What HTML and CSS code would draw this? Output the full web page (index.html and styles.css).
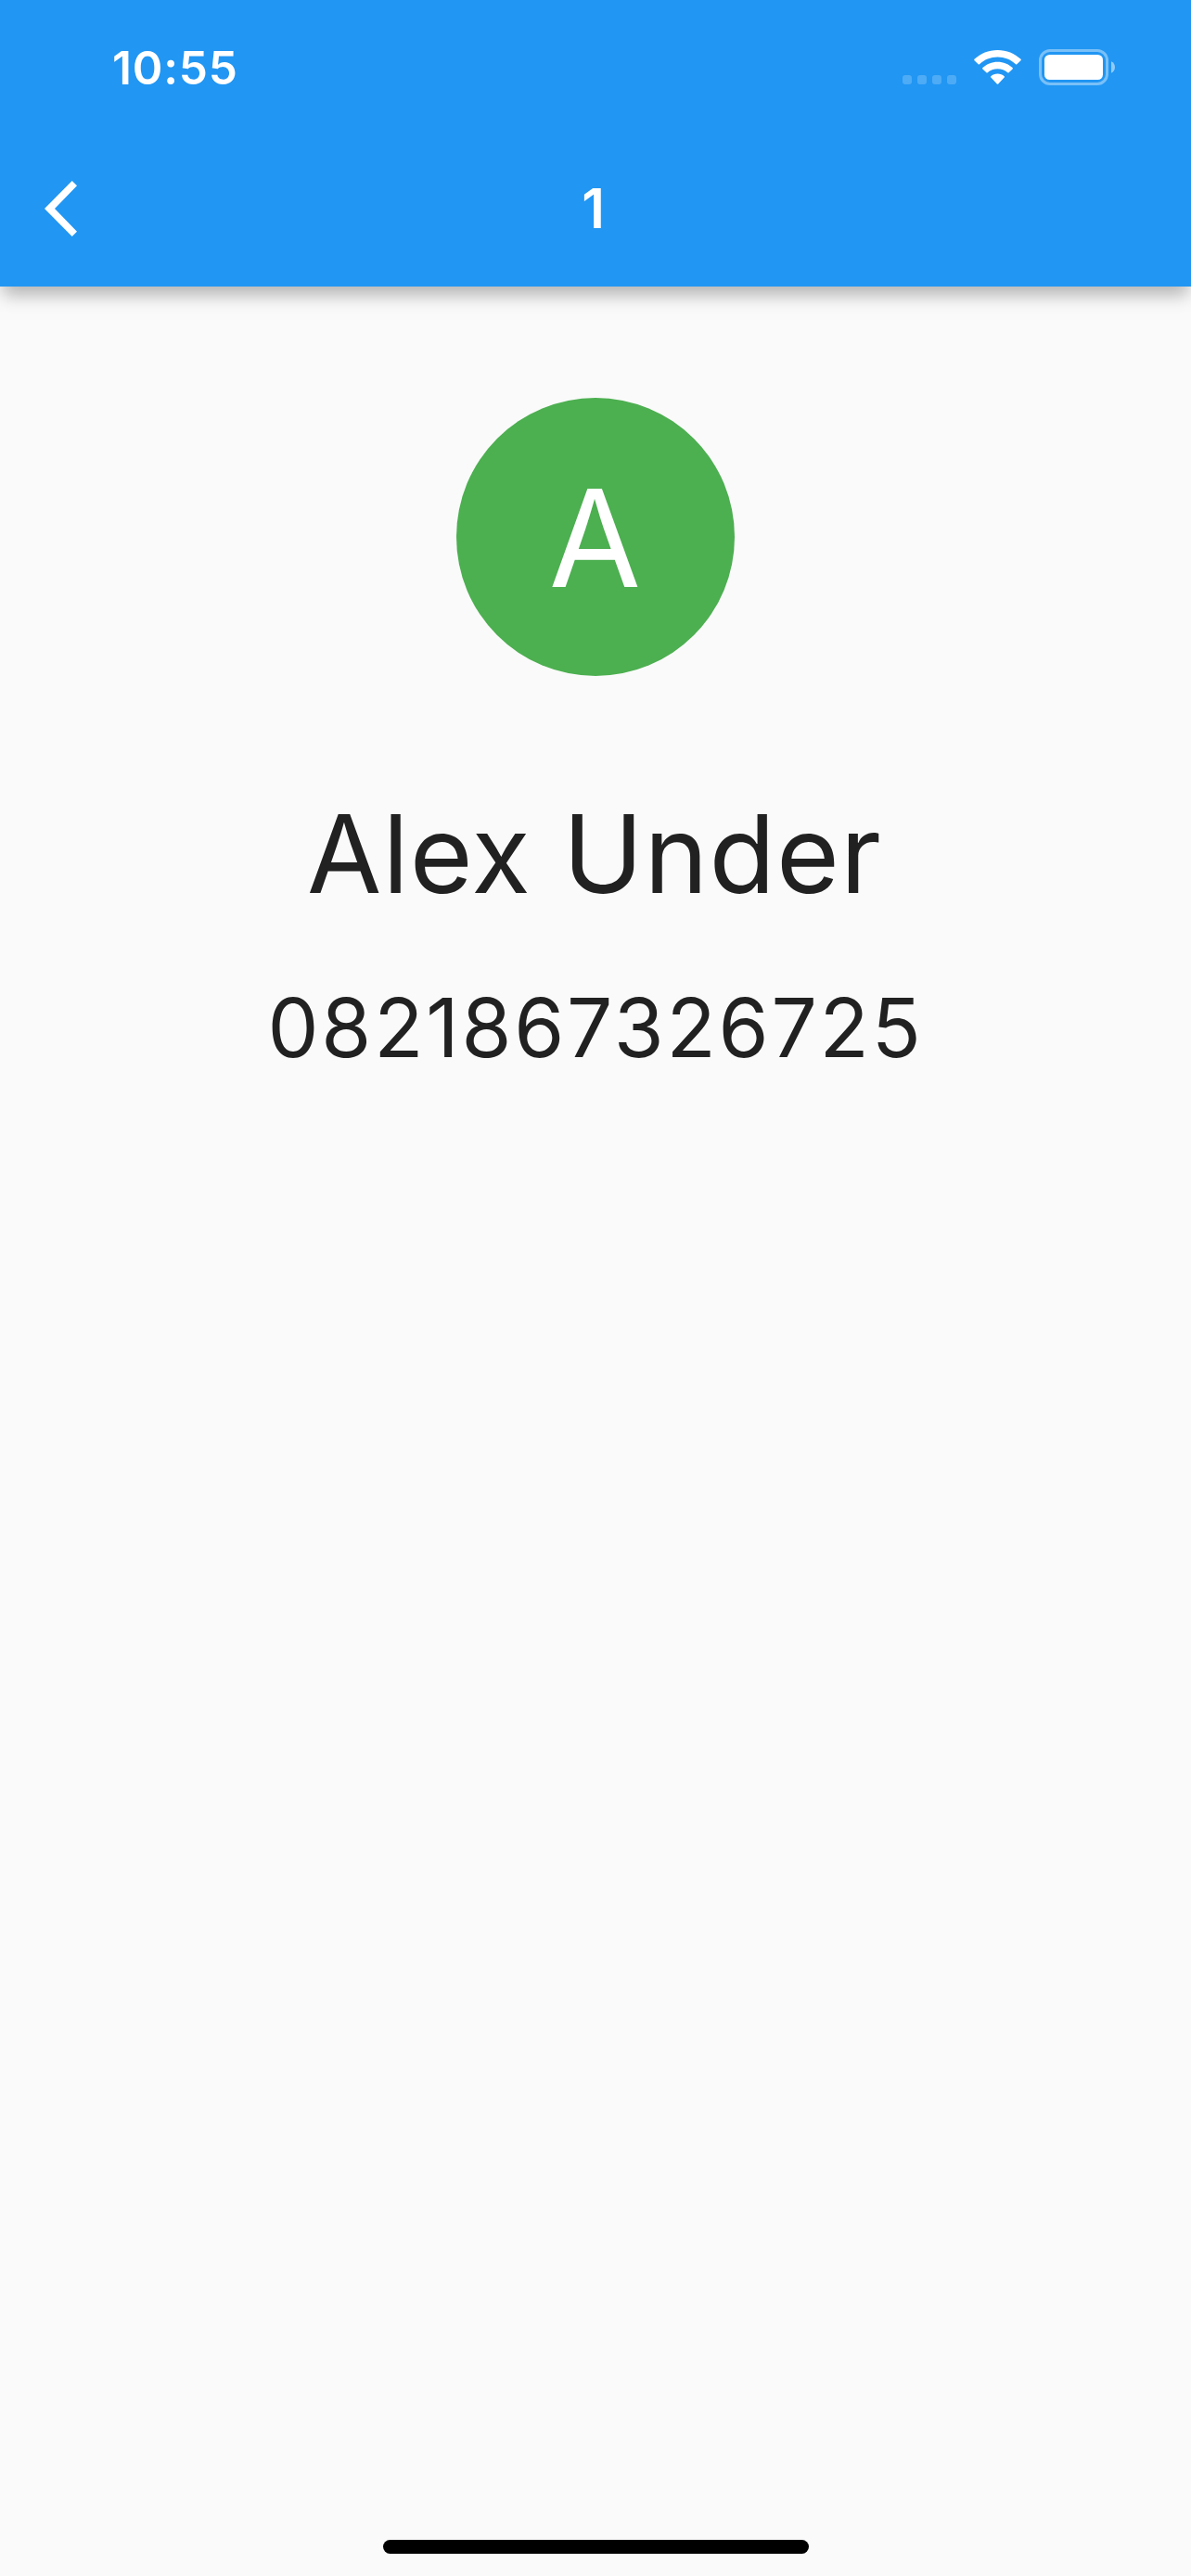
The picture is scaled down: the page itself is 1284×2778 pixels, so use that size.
FILE: index.html
```html
<!DOCTYPE html>
<html lang="en">
<head>
<meta charset="utf-8">
<title>Contact</title>
<link rel="stylesheet" href="styles.css">
</head>
<body>
<div class="screen">
  <header class="header">
    <div class="status-bar">
      <span class="time">10:55</span>
      <svg class="status-icons" width="229" height="39" viewBox="0 0 229 39" fill="#fff">
        <g opacity=".2">
          <rect x="0" y="28" width="10" height="10" rx="3"/>
          <rect x="16" y="28" width="10" height="10" rx="3"/>
          <rect x="32" y="28" width="10" height="10" rx="3"/>
          <rect x="48" y="28" width="10" height="10" rx="3"/>
        </g>
        <path d="M102.500 1C92.800 1 84 4.700 77.500 10.800Q76.800 11.500 77.500 12.200L81.700 16.300Q82.300 16.900 83 16.300C88.200 11.400 95 8.600 102.500 8.600S116.800 11.400 122 16.300Q122.700 16.900 123.300 16.300L127.500 12.200Q128.200 11.500 127.500 10.800C121 4.700 112.200 1 102.500 1Z"/>
        <path d="M102.500 13.700C96.300 13.700 90.600 16.100 86.400 20Q85.700 20.700 86.400 21.400L90.400 25.300Q91 25.900 91.700 25.300C94.600 22.800 98.300 21.300 102.500 21.300S110.400 22.800 113.300 25.300Q114 25.900 114.600 25.300L118.600 21.400Q119.300 20.700 118.600 20C114.400 16.100 108.700 13.700 102.500 13.700Z"/>
        <path d="M102.500 26.500C99.700 26.500 97.200 27.500 95.300 29.200Q94.600 29.900 95.300 30.600L101.800 37.400Q102.500 38.100 103.200 37.400L109.700 30.600Q110.400 29.900 109.700 29.200C107.800 27.500 105.300 26.500 102.500 26.500Z"/>
        <rect x="148.500" y="1.500" width="72" height="36" rx="10.500" fill="none" stroke="#fff" stroke-width="3" opacity=".4"/>
        <rect x="153" y="6" width="63" height="27" rx="5.500"/>
        <path d="M225 13.300C227.500 14.300 229 16.600 229 19.500S227.500 24.700 225 25.700Z" opacity=".5"/>
      </svg>
    </div>
    <div class="app-bar">
      <svg class="back" width="36" height="60" viewBox="0 0 36 60" fill="#fff"><path d="M0 30L29.700 0L35 5.300L11 30L35 54.700L29.700 60Z"/></svg>
      <h1 class="title">1</h1>
    </div>
  </header>
  <main class="contact">
    <div class="avatar"><span class="initial">A</span></div>
    <div class="name">Alex Under</div>
    <div class="phone">0821867326725</div>
  </main>
  <div class="home-indicator"></div>
</div>
</body>
</html>
```
FILE: styles.css
```css
* { box-sizing: border-box; }

body {
  margin: 0;
  font-family: Inter, "Liberation Sans", sans-serif;
  background: #fafafa;
  color: #212121;
}

.screen {
  display: flex;
  flex-direction: column;
  width: 1284px;
  height: 2778px;
  overflow: hidden;
}

.header {
  height: 309px;
  background: #2196f3;
  color: #fff;
  box-shadow: 0 12px 18px -3px rgba(0, 0, 0, .29);
}

.status-bar {
  display: flex;
  align-items: center;
  justify-content: space-between;
  height: 141px;
  padding: 4px 82px 0 121px;
}

.time {
  font-size: 49.5px;
  font-weight: 600;
  line-height: 60px;
  letter-spacing: .8px;
}

.app-bar {
  display: grid;
  grid-template-columns: 1fr auto 1fr;
  align-items: center;
  height: 168px;
  padding: 0 48px;
}

.title {
  margin: 0;
  padding-right: 5px;
  font-size: 58.5px;
  font-weight: 600;
  line-height: 72px;
}

.contact {
  display: flex;
  flex: 1;
  flex-direction: column;
  align-items: center;
  padding-top: 120px;
}

.avatar {
  display: flex;
  justify-content: center;
  width: 300px;
  height: 300px;
  padding-right: 1px;
  border-radius: 50%;
  background: #4caf50;
  color: #fff;
}

.initial {
  font-size: 146px;
  line-height: 302px;
  transform: scaleX(.985);
}

.name {
  margin-top: 122px;
  padding-right: 2px;
  font-size: 116.5px;
  line-height: 140px;
  letter-spacing: 1.1px;
}

.phone {
  margin-top: 64px;
  font-size: 87.3px;
  line-height: 106px;
  letter-spacing: 2.77px;
}

.home-indicator {
  width: 459px;
  height: 15px;
  margin: 0 0 24px 413px;
  border-radius: 8px;
  background: #000;
}
```
